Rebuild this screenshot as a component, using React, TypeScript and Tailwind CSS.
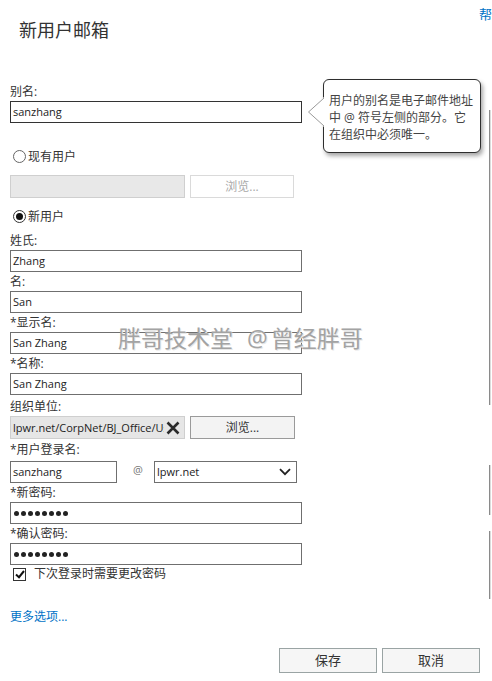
import React from "react";

const font = "font-['Open_Sans','Noto_Sans_CJK_SC',sans-serif]";

function Label({ text, className = "" }: { text: string; className?: string }) {
  return <div className={`h-[19px] text-[12px] leading-[19px] text-[#333] ${className}`}>{text}</div>;
}

function TextBox({ value, dark = false }: { value: string; dark?: boolean }) {
  return (
    <div
      className={`h-[22px] w-[292px] border bg-white px-[2px] text-[11px] leading-[20px] text-[#222] ${
        dark ? "border-[#333]" : "border-[#6f6f6f]"
      }`}
    >
      {value}
    </div>
  );
}

function Dots() {
  return (
    <div className="flex h-[22px] w-[292px] items-center gap-[2px] border border-[#6f6f6f] bg-white pl-[3px]">
      {Array.from({ length: 8 }).map((_, i) => (
        <span key={i} className="h-[5px] w-[5px] rounded-full bg-[#222]" />
      ))}
    </div>
  );
}

function Radio({ checked, label }: { checked?: boolean; label: string }) {
  return (
    <div className="flex h-[17px] items-center pl-[3px] text-[12px] text-[#333]">
      <span
        className={`flex h-[13px] w-[13px] items-center justify-center rounded-full border bg-white ${
          checked ? "border-[#333]" : "border-[#666]"
        }`}
      >
        {checked && <span className="h-[7px] w-[7px] rounded-full bg-[#111]" />}
      </span>
      <span className="ml-[2px]">{label}</span>
    </div>
  );
}

export default function App() {
  return (
    <div className={`relative h-[681px] w-[492px] overflow-hidden bg-white text-[#333] ${font}`}>
      <div className="absolute left-[479px] top-[5px] whitespace-nowrap text-[13px] text-[#0072c6]">帮助</div>

      {/* scroll edge lines */}
      <div className="absolute left-[489px] top-[110px] h-[295px] w-[2px] border-l border-[#8a8a8a] bg-[#dcdcdc]" />
      <div className="absolute left-[489px] top-[465px] h-[50px] w-[2px] border-l border-[#8a8a8a] bg-[#dcdcdc]" />
      <div className="absolute left-[489px] top-[531px] h-[68px] w-[2px] border-l border-[#8a8a8a] bg-[#dcdcdc]" />

      <h1 className="pl-[19px] pt-[18px] text-[18px] font-normal leading-6 text-[#333]">新用户邮箱</h1>

      <div className="mt-[40px] pl-[10px]">
        <Label text="别名:" />
        <TextBox value="sanzhang" dark />

        <div className="mt-[25px]">
          <Radio label="现有用户" />
        </div>
        <div className="mt-[10px] flex h-[23px]">
          <div className="w-[175px] border border-[#cfcfcf] bg-[#e8e8e8]" />
          <div className="ml-[5px] flex w-[104px] items-center justify-center border border-[#dadada] bg-white text-[12px] text-[#a9a9a9]">
            浏览...
          </div>
        </div>
        <div className="mt-[10px]">
          <Radio checked label="新用户" />
        </div>

        <Label text="姓氏:" className="mt-[6px]" />
        <TextBox value="Zhang" />
        <Label text="名:" />
        <TextBox value="San" />
        <Label text="*显示名:" />
        <TextBox value="San Zhang" />
        <Label text="*名称:" />
        <TextBox value="San Zhang" />

        <Label text="组织单位:" className="mt-[2px]" />
        <div className="flex h-[23px]">
          <div className="flex w-[175px] items-center border border-[#cfcfcf] bg-[#e6e6e6] pl-[2px]">
            <div className="w-[151px] overflow-hidden whitespace-nowrap text-[11px] leading-[20px] text-[#222]">
              lpwr.net/CorpNet/BJ_Office/Users
            </div>
            <svg width="16" height="16" viewBox="0 0 16 16" className="ml-[1px]">
              <path d="M2.5 2.5 L13.5 13.5 M13.5 2.5 L2.5 13.5" stroke="#2a2a2a" strokeWidth="2.6" />
            </svg>
          </div>
          <div className="ml-[5px] flex w-[105px] items-center justify-center border border-[#9a9a9a] bg-[#f3f3f3] text-[12px] text-[#333]">
            浏览...
          </div>
        </div>

        <Label text="*用户登录名:" className="h-[22px] leading-[22px]" />
        <div className="flex h-[22px] items-center">
          <div className="h-[22px] w-[107px] border border-[#6f6f6f] bg-white px-[2px] text-[11px] leading-[20px] text-[#222]">
            sanzhang
          </div>
          <span className="w-[37px] pb-[4px] pl-[5px] text-center text-[11px] leading-[18px] text-[#777]">@</span>
          <div className="flex h-[22px] w-[143px] items-center justify-between border border-[#6f6f6f] bg-white pl-[2px] pr-[5px] text-[11px] text-[#222]">
            <span>lpwr.net</span>
            <svg width="12" height="8" viewBox="0 0 12 8">
              <path d="M1 1.2 L6 6.2 L11 1.2" fill="none" stroke="#222" strokeWidth="1.8" />
            </svg>
          </div>
        </div>

        <Label text="*新密码:" className="h-[18px] leading-[18px]" />
        <Dots />
        <Label text="*确认密码:" />
        <Dots />

        <div className="mt-[2px] flex h-[14px] items-center pl-[3px] text-[12px] text-[#333]">
          <span className="flex h-[13px] w-[13px] items-center justify-center border border-[#333] bg-white">
            <svg width="10" height="9" viewBox="0 0 10 9">
              <path d="M1 4.5 L4 7.2 L9 1" fill="none" stroke="#111" strokeWidth="2" />
            </svg>
          </span>
          <span className="ml-[8px]">下次登录时需要更改密码</span>
        </div>

        <div className="mt-[28px] h-[16px] text-[12px] leading-[16px] text-[#0072c6]">更多选项...</div>
      </div>

      <div className="mt-[23px] flex justify-end gap-[5px] pr-[12px]">
        <div className="flex h-[25px] w-[98px] items-center justify-center border border-[#9aa4a4] bg-[#f6f6f6] text-[13px] text-[#333]">
          保存
        </div>
        <div className="flex h-[25px] w-[98px] items-center justify-center border border-[#9aa4a4] bg-[#f6f6f6] text-[13px] text-[#333]">
          取消
        </div>
      </div>

      {/* tooltip */}
      <div className="absolute left-[323px] top-[79px] h-[74px] w-[158px] rounded-[6px] border border-[#2e2e2e] bg-white pl-[5px] pt-[12px] text-[12px] leading-[17px] text-[#444] shadow-[2px_3px_4px_rgba(0,0,0,0.35)]">
        用户的别名是电子邮件地址
        <br />中 @ 符号左侧的部分。它
        <br />在组织中必须唯一。
      </div>
      <svg className="absolute left-[307px] top-[97px]" width="18" height="31" viewBox="0 0 18 31">
        <polygon points="17,0 1,15 17,30" fill="#fff" />
        <polyline points="17,1 1.5,15 17,29" fill="none" stroke="#9a9a9a" strokeWidth="1" />
      </svg>

      {/* watermark */}
      <div className="pointer-events-none absolute left-[118px] top-[327px] whitespace-nowrap text-[23px] leading-none text-[#a3a3a3] [text-shadow:1px_1px_0_#e8e8e8]">
        胖哥技术堂<span className="ml-[14px] mr-[3px]">@</span>曾经胖哥
      </div>
    </div>
  );
}
